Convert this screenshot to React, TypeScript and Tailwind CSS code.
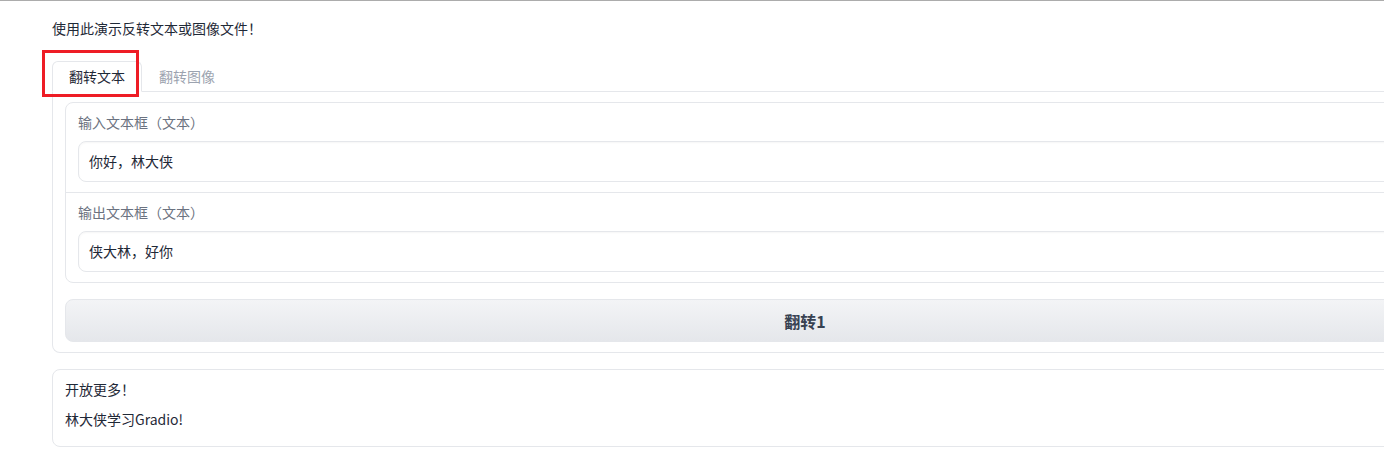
const FONT = { fontFamily: '"Noto Sans CJK SC", "Noto Sans", sans-serif' };

function TextField({ label, value }: { label: string; value: string }) {
  return (
    <div className="px-[12px] pt-[9px] pb-[10px]">
      <div className="text-[14px] leading-[20px] text-[#6b7280]">{label}</div>
      <div className="mt-[9px] h-[41px] rounded-[8px] border border-[#e5e7eb] bg-white shadow-[inset_0_1px_2px_rgba(0,0,0,0.04)] px-[10px] flex items-center text-[14px] text-[#1f2937]">
        {value}
      </div>
    </div>
  );
}

export default function App() {
  return (
    <div className="w-[1384px] h-[459px] overflow-hidden bg-white border-t border-[#acacac]" style={FONT}>
      <div className="relative w-[1610px] px-[52px]">
        <p className="pt-[17px] text-[14px] leading-[20px] text-[#1f2937]">使用此演示反转文本或图像文件！</p>

        {/* 标注框 */}
        <div className="absolute left-[42px] top-[49px] w-[97px] h-[47px] border-[3px] border-[#ee1c25] pointer-events-none" />

        {/* tabs */}
        <div className="mt-[23px] flex items-end border-b border-[#e5e7eb] h-[31px]">
          <button className="-mb-px h-[31px] px-[16px] rounded-t-[6px] border border-b-white border-[#e5e7eb] bg-white text-[14px] text-[#1f2937]">
            翻转文本
          </button>
          <button className="h-[30px] px-[17px] text-[14px] text-[#9ca3af]">翻转图像</button>
        </div>

        <div className="border border-t-0 border-[#e5e7eb] rounded-b-[8px] px-[12px] pt-[10px] pb-[10px]">
          <div className="rounded-[8px] border border-[#e5e7eb] bg-white divide-y divide-[#e5e7eb]">
            <TextField label="输入文本框（文本）" value="你好，林大侠" />
            <TextField label="输出文本框（文本）" value="侠大林，好你" />
          </div>
          <button className="mt-[16px] w-full h-[43px] rounded-[8px] border border-[#e5e7eb] bg-gradient-to-b from-[#f3f4f6] to-[#e5e7eb] text-[16px] font-semibold text-[#374151]">
            翻转1
          </button>
        </div>

        <div className="mt-[16px] rounded-[8px] border border-[#e5e7eb] px-[12px] pt-[9px] pb-[17px] text-[14px] leading-[20px] text-[#1f2937]">
          <p>开放更多！</p>
          <p className="mt-[10px]">林大侠学习Gradio!</p>
        </div>
      </div>
    </div>
  );
}
